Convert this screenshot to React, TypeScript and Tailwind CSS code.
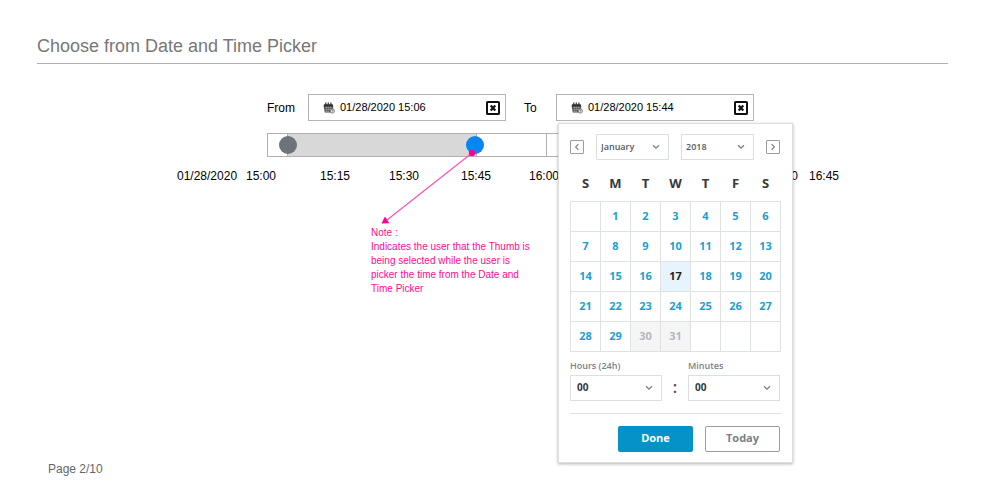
import React, { useState } from 'react';

const timeLabels = ['15:00', '15:15', '15:30', '15:45', '16:00', '16:30', '16:45'];

const weekDays = ['S', 'M', 'T', 'W', 'T', 'F', 'S'];

const weeks: (number | null)[][] = [
  [null, 1, 2, 3, 4, 5, 6],
  [7, 8, 9, 10, 11, 12, 13],
  [14, 15, 16, 17, 18, 19, 20],
  [21, 22, 23, 24, 25, 26, 27],
  [28, 29, 30, 31, null, null, null]
];

const months = [
  'January', 'February', 'March', 'April', 'May', 'June',
  'July', 'August', 'September', 'October', 'November', 'December'
];

const hours = Array.from({ length: 24 }, (_, i) => String(i).padStart(2, '0'));
const minutes = Array.from({ length: 60 }, (_, i) => String(i).padStart(2, '0'));

const CalendarIcon: React.FC = () => (
  <svg className="h-3 w-3 shrink-0" viewBox="0 0 12 12" fill="none">
    <path d="M1 2.2h8.6l.6 2H.8z" fill="#222" />
    <path d="M2.8.4v2.4M5.3.4v2.4M7.9.4v2.4" stroke="#333" strokeWidth="1.2" />
    <path d="M.6 3.8h9.6v6.8H1.8z" fill="#484848" />
    <path d="M2 5.7h7.4M2 7.7h6M2.2 9.4h4" stroke="#bbb" strokeWidth=".6" />
    <path d="M3.6 4.6v5.4M5.6 4.6v5.4M7.6 4.6v3.4" stroke="#999" strokeWidth=".6" />
    <circle cx="9.3" cy="9" r="2.1" fill="#ddd" stroke="#777" strokeWidth=".8" />
    <path d="M9.3 7.9V9h.9" stroke="#555" strokeWidth=".6" />
  </svg>
);

const CloseIcon: React.FC = () => (
  <svg className="h-[14px] w-[14px]" viewBox="0 0 14 14" fill="none">
    <rect x="1" y="1" width="12" height="12" rx="0.6" stroke="#111" strokeWidth="2" />
    <path d="M4.7 4.5l4.6 5M9.3 4.5L4.7 9.5" stroke="#111" strokeWidth="2.2" />
  </svg>
);

interface DateFieldProps {
  id: string;
  initial: string;
}

const DateField: React.FC<DateFieldProps> = ({ id, initial }) => {
  const [value, setValue] = useState(initial);

  return (
    <div className="flex h-[27px] w-[198px] items-center border border-[#b4b4b4] bg-white pl-[14px] pr-[5px]">
      <CalendarIcon />
      <input
        id={id}
        type="text"
        value={value}
        onChange={(e) => setValue(e.target.value)}
        className="ml-[5px] min-w-0 flex-1 text-[11px] text-black outline-none"
      />
      <button type="button" aria-label="Clear" onClick={() => setValue('')}>
        <CloseIcon />
      </button>
    </div>
  );
};

interface SelectFieldProps {
  id: string;
  label: string;
  options: string[];
  value: string;
  onChange: (value: string) => void;
  large?: boolean;
}

const SelectField: React.FC<SelectFieldProps> = ({ id, label, options, value, onChange, large }) => (
  <div className={large ? 'w-[92px]' : 'w-[73px]'}>
    {large && (
      <label htmlFor={id} className="block text-[9px] leading-[12px] font-semibold text-[#7b7f88]">
        {label}
      </label>
    )}
    <div className={large ? 'relative mt-[3px]' : 'relative'}>
      <select
        id={id}
        aria-label={label}
        value={value}
        onChange={(e) => onChange(e.target.value)}
        className={
          large
            ? 'block h-[26px] w-full appearance-none border border-[#dcdfe2] bg-white pl-[6px] text-[10px] font-bold text-[#33383d]'
            : 'block h-[26px] w-full appearance-none border border-[#dcdfe2] bg-white pl-[4px] text-[9px] font-semibold text-[#555a60]'
        }
      >
        {options.map((option) => (
          <option key={option}>{option}</option>
        ))}
      </select>
      <svg
        className="pointer-events-none absolute top-[10px] right-[9px] h-[6px] w-[8px]"
        viewBox="0 0 8 6"
        fill="none"
        stroke="#7b8088"
        strokeWidth="1.3"
      >
        <path d="M1 1.2l3 3 3-3" />
      </svg>
    </div>
  </div>
);

const DatePicker: React.FC = () => {
  const [month, setMonth] = useState('January');
  const [year, setYear] = useState('2018');
  const [hour, setHour] = useState('00');
  const [minute, setMinute] = useState('00');
  const [selected, setSelected] = useState(17);

  const stepMonth = (step: number) => {
    const next = (months.indexOf(month) + step + 12) % 12;
    setMonth(months[next]);
  };

  return (
    <div className="w-[235px] border border-[#dedede] bg-white px-[11px] py-[10px] font-['Open_Sans',sans-serif] shadow-[0_1px_3px_rgba(0,0,0,0.3)]">
      <div className="flex items-center justify-between pr-px">
        <button
          type="button"
          aria-label="Previous month"
          onClick={() => stepMonth(-1)}
          className="flex h-[14px] w-[14px] items-center justify-center rounded-[1px] border border-[#9a9ba6]"
        >
          <svg className="h-2 w-2" viewBox="0 0 8 8" fill="none" stroke="#777a85" strokeWidth="1.1">
            <path d="M5.4 1.2L2.6 4l2.8 2.8" />
          </svg>
        </button>
        <SelectField id="month" label="Month" options={months} value={month} onChange={setMonth} />
        <SelectField
          id="year"
          label="Year"
          options={['2017', '2018', '2019', '2020']}
          value={year}
          onChange={setYear}
        />
        <button
          type="button"
          aria-label="Next month"
          onClick={() => stepMonth(1)}
          className="flex h-[14px] w-[14px] items-center justify-center rounded-[1px] border border-[#9a9ba6]"
        >
          <svg className="h-2 w-2" viewBox="0 0 8 8" fill="none" stroke="#777a85" strokeWidth="1.1">
            <path d="M2.6 1.2L5.4 4 2.6 6.8" />
          </svg>
        </button>
      </div>

      <table className="mt-[6px] w-full table-fixed border-collapse text-center">
        <thead>
          <tr>
            {weekDays.map((day, index) => (
              <th key={index} className="h-[35px] p-0 text-[13px] font-bold text-[#33393d]">
                {day}
              </th>
            ))}
          </tr>
        </thead>
        <tbody>
          {weeks.map((week, row) => (
            <tr key={row}>
              {week.map((day, col) => {
                const disabled = day !== null && day > 29;
                let cell = 'text-[#1c9fd0]';
                if (disabled) cell = 'bg-[#f5f5f5] text-[#b3b8be]';
                if (day === selected) cell = 'bg-[#e8f4fd] text-[#222]';

                return (
                  <td key={col} className={`h-[30px] border border-[#dfe2e3] p-0 text-[11px] font-bold ${cell}`}>
                    {day !== null && (
                      <button
                        type="button"
                        disabled={disabled}
                        onClick={() => setSelected(day)}
                        className="block h-[29px] w-full"
                      >
                        {day}
                      </button>
                    )}
                  </td>
                );
              })}
            </tr>
          ))}
        </tbody>
      </table>

      <div className="mt-[8px] flex items-end justify-between pr-px">
        <SelectField id="hours" label="Hours (24h)" options={hours} value={hour} onChange={setHour} large />
        <span className="text-[16px] leading-[28px] font-semibold text-[#4a4f54]">:</span>
        <SelectField id="minutes" label="Minutes" options={minutes} value={minute} onChange={setMinute} large />
      </div>

      <div className="mt-[12px] flex justify-end gap-[12px] border-t border-[#dfe2e3] pt-[12px] pr-px">
        <button type="button" className="h-[26px] w-[75px] rounded-[2px] bg-[#0592c9] text-[11px] font-bold text-white">
          Done
        </button>
        <button
          type="button"
          className="h-[26px] w-[75px] rounded-[2px] border border-[#9a9ca5] bg-white text-[11px] font-bold text-[#7b7f88]"
        >
          Today
        </button>
      </div>
    </div>
  );
};

const TimeRange: React.FC = () => {
  const [start, setStart] = useState(2.5);
  const [end, setEnd] = useState(44.3);

  return (
    <div className="relative ml-[90px] h-6 w-[490px] border border-[#b0b0b0] bg-white">
      {/* selected span between the thumbs, then the quarter-hour ticks */}
      <div className="flex h-full">
        <div className="w-[20px] border-r border-[#b0b0b0]" />
        <div className="w-[189px] border-r border-[#b0b0b0] bg-[#d8d8d8]" />
        <div className="w-[70px] border-r border-[#b0b0b0]" />
        <div className="w-[70px] border-r border-[#b0b0b0]" />
        <div className="w-[70px] border-r border-[#b0b0b0]" />
      </div>
      <input
        type="range"
        aria-label="Start time"
        min={0}
        max={105}
        step="any"
        value={start}
        onChange={(e) => setStart(Number(e.target.value))}
        className="pointer-events-none absolute inset-0 w-full appearance-none bg-transparent [&::-webkit-slider-thumb]:pointer-events-auto [&::-webkit-slider-thumb]:h-[18px] [&::-webkit-slider-thumb]:w-[18px] [&::-webkit-slider-thumb]:appearance-none [&::-webkit-slider-thumb]:rounded-full [&::-webkit-slider-thumb]:bg-[#6d737a]"
      />
      <input
        type="range"
        aria-label="End time"
        min={0}
        max={105}
        step="any"
        value={end}
        onChange={(e) => setEnd(Number(e.target.value))}
        className="pointer-events-none absolute inset-0 w-full appearance-none bg-transparent [&::-webkit-slider-thumb]:pointer-events-auto [&::-webkit-slider-thumb]:h-[18px] [&::-webkit-slider-thumb]:w-[18px] [&::-webkit-slider-thumb]:appearance-none [&::-webkit-slider-thumb]:rounded-full [&::-webkit-slider-thumb]:bg-[#0a84f0]"
      />
      {/* pointer from the active thumb down to the note */}
      <svg
        className="pointer-events-none absolute top-[16px] left-[112px] h-[76px] w-[102px]"
        viewBox="0 0 102 76"
        fill="none"
      >
        <path d="M92 3L7 70" stroke="#ff4db2" strokeWidth="1.1" />
        <circle cx="92" cy="3" r="3.2" fill="#ff0090" />
        <path d="M1.5 73.5L5 66.6L9.4 73.2z" fill="#ff0090" />
      </svg>
    </div>
  );
};

const App: React.FC = () => {
  return (
    <div className="flex min-h-screen flex-col bg-white pr-[38px] pl-[37px] font-['Liberation_Sans',Arial,sans-serif] text-[12px] text-black">
      <header className="border-b border-[#b0b0b0] pt-[34px] pb-[5px]">
        <h1 className="text-[18px] leading-6 text-[#777]">Choose from Date and Time Picker</h1>
      </header>

      <main className="pt-[30px] pl-[140px]">
        <div className="ml-[90px] flex items-center">
          <label htmlFor="from" className="w-[41px]">From</label>
          <DateField id="from" initial="01/28/2020 15:06" />
          <label htmlFor="to" className="ml-[18px] w-[32px]">To</label>
          <div className="relative">
            <DateField id="to" initial="01/28/2020 15:44" />
            <div className="absolute top-full left-[2px] z-10 mt-[2px]">
              <DatePicker />
            </div>
          </div>
        </div>

        <div className="mt-3">
          <TimeRange />
        </div>

        <div className="mt-[11px] grid grid-cols-[69px_74px_69px_72px_68px_239px_41px_30px] leading-4">
          <span>01/28/2020</span>
          {timeLabels.map((label) => (
            <span key={label}>{label}</span>
          ))}
        </div>

        <div className="mt-[42px] ml-[194px] w-[160px] text-[10px] leading-[14px] text-[#ff0a90]">
          <p>Note :</p>
          <p>Indicates the user that the Thumb is being selected while the user is picker the time from the Date and Time Picker</p>
        </div>
      </main>

      <footer className="mt-auto pb-[22px] pl-[11px] leading-4 text-[#666]">Page 2/10</footer>
    </div>
  );
};

export default App;
